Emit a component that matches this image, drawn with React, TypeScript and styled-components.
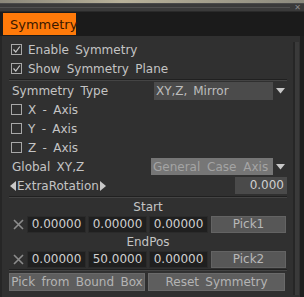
import styled, { createGlobalStyle } from 'styled-components'

const Global = createGlobalStyle`
  html, body {
    margin: 0;
    padding: 0;
    background: #262626;
  }
  * { box-sizing: border-box; }
`

const Frame = styled.div`
  width: 304px;
  height: 297px;
  display: flex;
  flex-direction: column;
  background: #2b2b2b;
  font-family: "DejaVu Sans", Verdana, sans-serif;
  font-size: 12px;
  color: #c4c4c4;
  word-spacing: 2.5px;
  overflow: hidden;
`
const TopEdge = styled.div`
  height: 3px;
  background: linear-gradient(90deg, #8a877a, #b9b29a 40%, #8c8a7e);
`
const TitleBar = styled.div`
  height: 9px;
  background: #3a3a3a;
  border-top: 1px solid #4a4a4a;
  border-bottom: 1px solid #2a2a2a;
  display: flex;
  justify-content: flex-end;
  align-items: center;
  padding-right: 3px;
  position: relative;
  &::before {
    content: '';
    position: absolute;
    left: 0;
    right: 14px;
    top: 3px;
    height: 1px;
    background: #505050;
  }
`
const Close = styled.span`
  font-size: 8px;
  line-height: 8px;
  color: #8a8a8a;
  word-spacing: 0;
`
const TabBar = styled.div`
  height: 24px;
  background: #1b1b1b;
  padding: 1px 0 1px 3px;
  display: flex;
`
const Tab = styled.div`
  width: 73px;
  background: #ff7a0a;
  color: #3a1800;
  font-size: 13px;
  display: flex;
  align-items: center;
  padding-left: 7px;
  word-spacing: 0;
`
const Body = styled.div`
  flex: 1;
  display: flex;
  background: #303030;
  border-left: 2px solid #262626;
`
const Content = styled.div`
  flex: 1;
  padding: 4px 6px 0 7px;
  display: flex;
  flex-direction: column;
`
const ScrollTrack = styled.div`
  width: 6px;
  margin: 6px 1px 2px 0;
  background: #3a3a3a;
  border-left: 2px solid #262626;
`
const RightEdge = styled.div`
  width: 4px;
  background: #1e1e1e;
`
const Row = styled.div<{ $h?: number }>`
  height: ${p => p.$h ?? 19}px;
  flex-shrink: 0;
  display: flex;
  align-items: center;
  white-space: nowrap;
`
const Box = styled.span`
  width: 11px;
  height: 11px;
  margin: 0 6px 0 2px;
  border: 1px solid #a8a8a8;
  display: inline-flex;
  align-items: center;
  justify-content: center;
`
const Label = styled.span<{ $indent?: boolean }>`
  flex: 1;
  padding-left: ${p => (p.$indent ? 3 : 0)}px;
`
const Separator = styled.div`
  height: 1px;
  flex-shrink: 0;
  margin: 1px 0 0;
  background: #202020;
  border-bottom: 1px solid #444;
  box-sizing: content-box;
`
const Select = styled.div<{ $disabled?: boolean }>`
  width: ${p => (p.$disabled ? 122 : 119)}px;
  height: ${p => (p.$disabled ? 17 : 18)}px;
  background: ${p => (p.$disabled ? '#767676' : '#4b4b4b')};
  color: ${p => (p.$disabled ? '#a4a4a4' : '#bdbdbd')};
  display: flex;
  align-items: center;
  padding-left: 2px;
  word-spacing: ${p => (p.$disabled ? 3 : 2)}px;
`
const Arrow = styled.div`
  width: 14px;
  height: 18px;
  display: flex;
  align-items: center;
  justify-content: center;
`
const Value = styled.div`
  width: 52px;
  height: 17px;
  background: #4a4a4a;
  color: #cfcfcf;
  text-align: right;
  padding-right: 3px;
  line-height: 17px;
`
const Heading = styled.div`
  height: 17px;
  flex-shrink: 0;
  display: flex;
  align-items: center;
  justify-content: center;
`
const Cross = styled.span`
  width: 18px;
  display: flex;
  justify-content: center;
`
const Num = styled.div`
  width: 59px;
  height: 17px;
  margin-right: 2px;
  background: #1f1f1f;
  border: 1px solid #2a2a2a;
  color: #d0d0d0;
  display: flex;
  align-items: center;
  justify-content: center;
  word-spacing: 0;
`
const Pick = styled.div`
  width: 75px;
  height: 17px;
  margin-left: 1px;
  background: #575757;
  border: 1px solid #636363;
  color: #b8b8b8;
  display: flex;
  align-items: center;
  justify-content: center;
`
const Buttons = styled.div`
  display: flex;
  flex-shrink: 0;
  gap: 3px;
  margin-top: 2px;
`
const Button = styled.div<{ $w: number }>`
  width: ${p => p.$w}px;
  height: 18px;
  background: #5e5e5e;
  border: 1px solid #6a6a6a;
  color: #b4b4b4;
  display: flex;
  align-items: center;
  justify-content: center;
`
const ExtraLabel = styled.span`
  flex: 1;
  display: flex;
  align-items: center;
  word-spacing: 0;
  svg { margin: 0 1px; }
`

function Check({ checked }: { checked?: boolean }) {
  return (
    <Box>
      {checked && (
        <svg width="9" height="9" viewBox="0 0 9 9">
          <path d="M1.5 4.5 L3.8 7 L7.8 1.5" stroke="#c8c8c8" strokeWidth="1.2" fill="none" />
        </svg>
      )}
    </Box>
  )
}

function Tri() {
  return (
    <svg width="9" height="6" viewBox="0 0 9 6">
      <path d="M0 0 H9 L4.5 5.5 Z" fill="#c8c8c8" />
    </svg>
  )
}

function NumRow({ vals, pick }: { vals: string[]; pick: string }) {
  return (
    <Row $h={18}>
      <Cross>
        <svg width="11" height="11" viewBox="0 0 11 11">
          <path d="M1 1 L10 10 M10 1 L1 10" stroke="#8c8c8c" strokeWidth="1.6" />
        </svg>
      </Cross>
      {vals.map((v, i) => (
        <Num key={i}>{v}</Num>
      ))}
      <Pick>{pick}</Pick>
    </Row>
  )
}

export default function App() {
  return (
    <Frame>
      <Global />
      <TopEdge />
      <TitleBar>
        <Close>✕</Close>
      </TitleBar>
      <TabBar>
        <Tab>Symmetry</Tab>
      </TabBar>
      <Body>
        <Content>
          <Row><Check checked /><Label>Enable Symmetry</Label></Row>
          <Row><Check checked /><Label>Show Symmetry Plane</Label></Row>
          <Separator />
          <Row>
            <Label $indent>Symmetry Type</Label>
            <Select>XY,Z, Mirror</Select>
            <Arrow><Tri /></Arrow>
          </Row>
          <Row><Check /><Label>X - Axis</Label></Row>
          <Row><Check /><Label>Y - Axis</Label></Row>
          <Row><Check /><Label>Z - Axis</Label></Row>
          <Row>
            <Label $indent>Global XY,Z</Label>
            <Select $disabled>General Case Axis</Select>
            <Arrow><Tri /></Arrow>
          </Row>
          <Row>
            <ExtraLabel>
              <svg width="6" height="10" viewBox="0 0 6 10"><path d="M6 0 V10 L0 5 Z" fill="#c8c8c8" /></svg>
              ExtraRotation
              <svg width="6" height="10" viewBox="0 0 6 10"><path d="M0 0 V10 L6 5 Z" fill="#c8c8c8" /></svg>
            </ExtraLabel>
            <Value>0.000</Value>
          </Row>
          <Separator />
          <Heading>Start</Heading>
          <NumRow vals={['0.00000', '0.00000', '0.00000']} pick="Pick1" />
          <Heading>EndPos</Heading>
          <NumRow vals={['0.00000', '50.0000', '0.00000']} pick="Pick2" />
          <Separator />
          <Buttons>
            <Button $w={136}>Pick from Bound Box</Button>
            <Button $w={137}>Reset Symmetry</Button>
          </Buttons>
        </Content>
        <ScrollTrack />
        <RightEdge />
      </Body>
    </Frame>
  )
}
